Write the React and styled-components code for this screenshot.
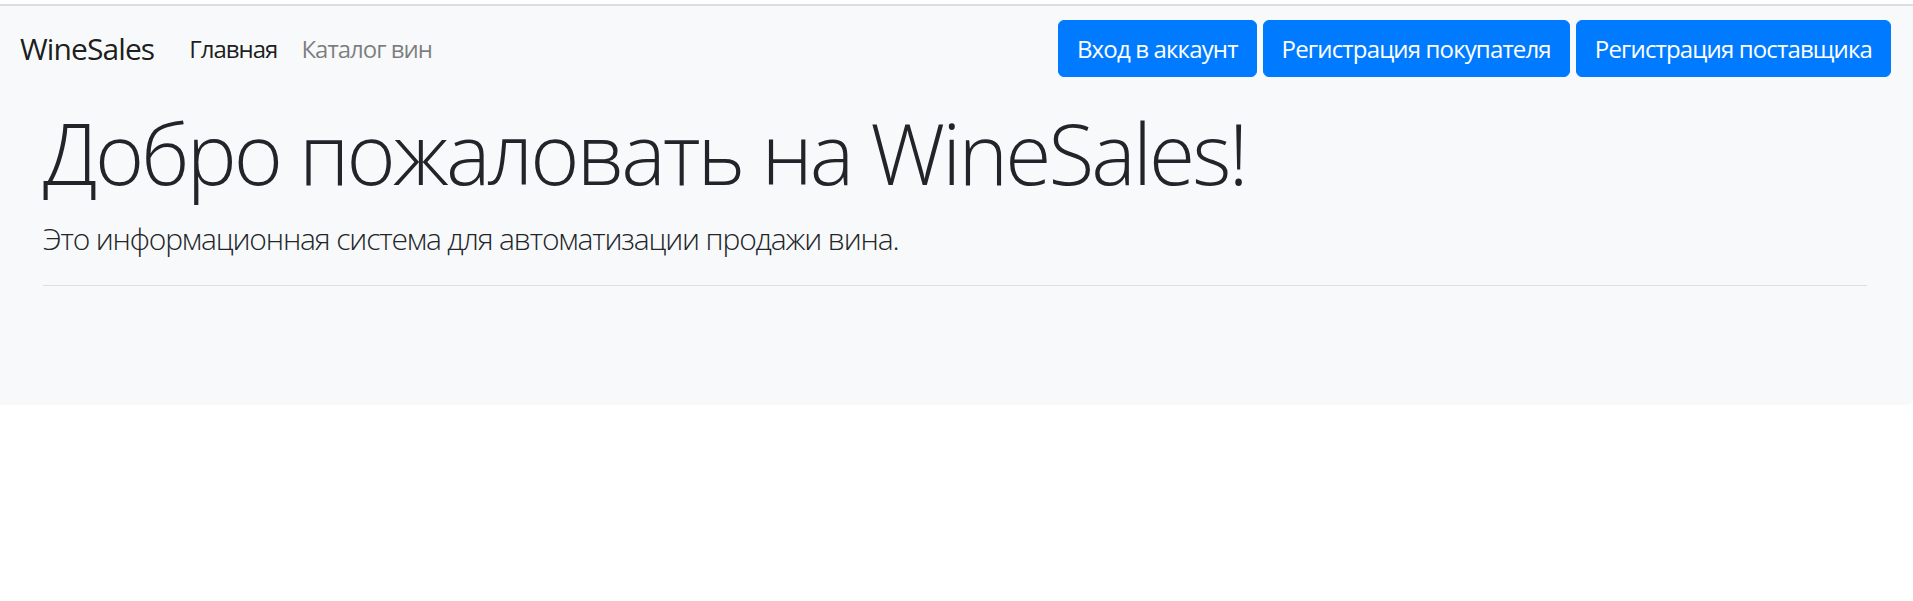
import React from 'react';
import styled, { createGlobalStyle } from 'styled-components';

const GlobalStyle = createGlobalStyle`
	html,
	body {
		margin: 0;
		padding: 0;
		background: #ffffff;
		font-family: 'Open Sans', 'Noto Sans', sans-serif;
		color: #212529;
	}
`;

const links = [
	{ title: 'Главная', active: true },
	{ title: 'Каталог вин', active: false },
];

const actions = ['Вход в аккаунт', 'Регистрация покупателя', 'Регистрация поставщика'];

const App = () => {
	return (
		<>
			<GlobalStyle />
			<Page>
				<Navbar>
					<Brand>WineSales</Brand>
					<NavList>
						{links.map((link) => (
							<NavLink key={link.title} $active={link.active}>
								{link.title}
							</NavLink>
						))}
					</NavList>
					<Actions>
						{actions.map((title) => (
							<Button key={title}>{title}</Button>
						))}
					</Actions>
				</Navbar>
				<Jumbotron>
					<Title>Добро пожаловать на WineSales!</Title>
					<Lead>Это информационная система для автоматизации продажи вина.</Lead>
					<Divider />
				</Jumbotron>
			</Page>
		</>
	);
};

const Page = styled.div`
	margin-top: 4px;
	border-top: 2px solid #dcdde0;
	background-color: #f8f9fa;
	border-radius: 0 0 6px 0;
`;

const Navbar = styled.nav`
	display: flex;
	align-items: center;
	height: 85px;
	padding: 0 22px 0 20px;
`;

const Brand = styled.a`
	font-size: 30px;
	line-height: 1.5;
	letter-spacing: -0.9px;
	color: rgba(0, 0, 0, 0.9);
	margin-right: 23px;
	cursor: pointer;
`;

const NavList = styled.ul`
	display: flex;
	list-style: none;
	margin: 0;
	padding: 0;
	flex: 1;
`;

// пункт меню
const NavLink = styled.li`
	font-size: 24px;
	line-height: 1.5;
	letter-spacing: -1px;
	padding: 12px 12px;
	color: ${(props) => (props.$active ? 'rgba(0, 0, 0, 0.9)' : 'rgba(0, 0, 0, 0.5)')};
	cursor: pointer;
`;

const Actions = styled.div`
	display: flex;
	gap: 6px;
`;

const Button = styled.button`
	display: flex;
	align-items: center;
	height: 57px;
	padding: 0 18px;
	border: 1px solid #007bff;
	border-radius: 6px;
	background-color: #007bff;
	color: #ffffff;
	font-family: inherit;
	font-size: 24px;
	letter-spacing: -0.85px;
	cursor: pointer;
`;

const Jumbotron = styled.section`
	padding: 12px 46px 119px 43px;
`;

const Title = styled.h1`
	margin: 0 0 12px;
	font-size: 84px;
	font-weight: 300;
	line-height: 1.2;
	letter-spacing: -2.9px;
`;

const Lead = styled.p`
	margin: 0;
	font-size: 30px;
	font-weight: 300;
	line-height: 1.5;
	letter-spacing: -1.15px;
`;

const Divider = styled.hr`
	margin: 24px 0 0;
	border: 0;
	border-top: 1.5px solid rgba(0, 0, 0, 0.1);
`;

export default App;
